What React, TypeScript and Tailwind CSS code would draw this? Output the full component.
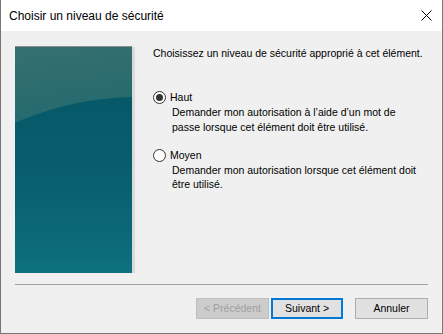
import React from "react";

function Radio({ checked }: { checked: boolean }) {
  return (
    <svg width="13" height="13" viewBox="0 0 13 13" className="shrink-0">
      <circle cx="6.5" cy="6.5" r="6" fill="#ffffff" stroke="#333333" strokeWidth="1" />
      {checked && <circle cx="6.5" cy="6.5" r="3.5" fill="#333333" />}
    </svg>
  );
}

function Picture() {
  return (
    <svg width="117" height="226" viewBox="0 0 117 226" className="block">
      <defs>
        <linearGradient id="bg" x1="0" y1="0" x2="30" y2="226" gradientUnits="userSpaceOnUse">
          <stop offset="0" stopColor="#35706f" />
          <stop offset="0.3" stopColor="#276b6e" />
          <stop offset="1" stopColor="#117279" />
        </linearGradient>
        <linearGradient id="arc" x1="0" y1="42" x2="0" y2="226" gradientUnits="userSpaceOnUse">
          <stop offset="0" stopColor="#065868" />
          <stop offset="0.4" stopColor="#085d6c" />
          <stop offset="0.75" stopColor="#0b6776" />
          <stop offset="1" stopColor="#0e727e" />
        </linearGradient>
      </defs>
      <rect x="0" y="0" width="117" height="226" fill="url(#bg)" />
      <circle cx="122" cy="350" r="300" fill="url(#arc)" />
    </svg>
  );
}

export default function App() {
  const font = { fontFamily: '"Liberation Sans", Arial, sans-serif' };
  return (
    <div
      className="w-[443px] h-[334px] flex flex-col bg-[#f0f0f0] border-x border-b border-[#777777] text-black overflow-hidden"
      style={font}
    >
      {/* Title bar */}
      <div className="h-[31px] shrink-0 bg-white flex items-center justify-between pl-[8px] pr-[10px]">
        <span className="text-[12px] leading-none">Choisir un niveau de sécurité</span>
        <svg width="11" height="11" viewBox="0 0 11 11">
          <path d="M0.5 0.5 L10.5 10.5 M10.5 0.5 L0.5 10.5" stroke="#000" strokeWidth="1" />
        </svg>
      </div>

      {/* Body */}
      <div className="flex-1 flex flex-col px-[14px] pt-[15px]">
        <div className="flex">
          <div className="flex shrink-0">
            <div className="border-t border-[#8c8c8c]">
              <Picture />
            </div>
            <div className="w-[3px] bg-[#dadada] mt-[1px]" />
          </div>
          <div className="ml-[18px] text-[10.5px] leading-[13px]">
            <div className="mt-[1px]">Choisissez un niveau de sécurité approprié à cet élément.</div>

            <div className="mt-[31px] flex items-center gap-[4px]">
              <Radio checked />
              <span>Haut</span>
            </div>
            <div className="ml-[19px] mt-[1px] leading-[15px]">
              Demander mon autorisation à l’aide d’un mot de
              <br />
              passe lorsque cet élément doit être utilisé.
            </div>

            <div className="mt-[14px] flex items-center gap-[4px]">
              <Radio checked={false} />
              <span>Moyen</span>
            </div>
            <div className="ml-[19px] mt-[1px] leading-[14px]">
              Demander mon autorisation lorsque cet élément doit
              <br />
              être utilisé.
            </div>
          </div>
        </div>

        <div className="mt-[11px] h-px bg-[#a0a0a0]" />

        <div className="mt-[13px] flex justify-end text-[10.5px]">
          <button className="w-[73px] h-[21px] bg-[#cccccc] border border-[#bfbfbf] text-[#a0a0a0]">
            &lt; Précédent
          </button>
          <button className="ml-[2px] w-[72px] h-[21px] bg-[#e1e1e1] border-2 border-[#0078d7] text-black">
            Suivant &gt;
          </button>
          <button className="ml-[12px] w-[73px] h-[21px] bg-[#e1e1e1] border border-[#adadad] text-black">
            Annuler
          </button>
        </div>
      </div>
    </div>
  );
}
